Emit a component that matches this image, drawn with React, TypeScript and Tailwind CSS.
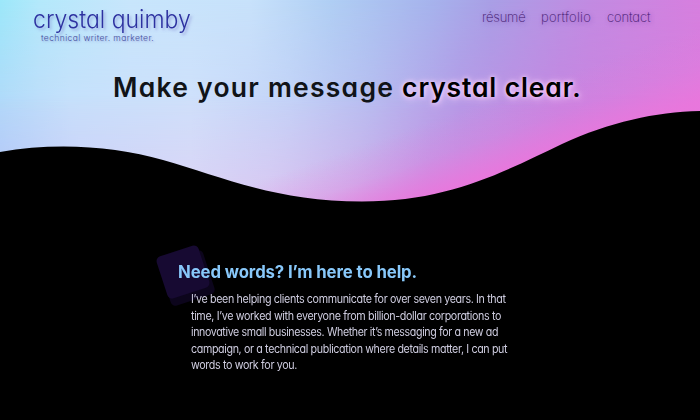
const face = "font-['Inter','Liberation_Sans',sans-serif] [font-feature-settings:'cv11'] whitespace-nowrap";

const lines = [
  { text: "I’ve been helping clients communicate for over seven years. In that", fit: "scale-x-[0.932]" },
  { text: "time, I’ve worked with everyone from billion-dollar corporations to", fit: "scale-x-[0.934]" },
  { text: "innovative small businesses. Whether it’s messaging for a new ad", fit: "scale-x-[0.924]" },
  { text: "campaign, or a technical publication where details matter, I can put", fit: "scale-x-[0.93]" },
  { text: "words to work for you.", fit: "scale-x-[0.935]" },
];

function Backdrop() {
  return (
    <div className="absolute inset-x-0 top-0 h-[210px]">
      <div className="absolute inset-0 bg-[linear-gradient(90deg,#9ce8fa_0px,#b4e9fb_40px,#c8e6fc_130px,#c8e2fb_250px,#b0cff4_330px,#a6b4ed_430px,#a99fe6_490px,#c28be2_590px,#d77fdf_700px)]" />
      <div className="absolute inset-0 bg-[linear-gradient(90deg,#b2d9f9_0px,#c6e0fb_70px,#cfe0fb_190px,#c3d2f7_290px,#b7bdf0_370px,#b699e6_460px,#c586e1_560px,#d77ddf_700px)] [mask-image:linear-gradient(180deg,transparent_0px,black_110px)]" />
      <div className="absolute inset-0 bg-[linear-gradient(90deg,#b8c4f8_0px,#cfcff8_80px,#dad4f5_190px,#d8c8f2_270px,#d0b2eb_350px,#c693e4_430px,#cd80df_570px,#e07add_700px)] [mask-image:linear-gradient(180deg,transparent_95px,black_195px)]" />
      <svg className="absolute inset-0" width="700" height="211" viewBox="0 0 700 211">
        <defs>
          <linearGradient id="glow" gradientUnits="userSpaceOnUse" x1="407" y1="129" x2="430" y2="195">
            <stop offset="0" stopColor="#ea78dc" stopOpacity="0" />
            <stop offset="0.5" stopColor="#ea78dc" stopOpacity="0.25" />
            <stop offset="1" stopColor="#ea76dc" stopOpacity="0.9" />
          </linearGradient>
        </defs>
        <rect width="700" height="211" fill="url(#glow)" />
        <path d="M0 152 C55 142 115 146 163 160 C220 176 275 201.5 362 201.5 C450 201.5 505 171 562 144 C610 122 655 112 700 111 V211 H0Z" fill="#000" />
      </svg>
    </div>
  );
}

export default function App() {
  return (
    <main className="relative h-[420px] w-[700px] overflow-hidden bg-black">
      <Backdrop />
      <header className="relative flex h-[60px] justify-between pl-[33px] pr-[50px]">
        <div className={face}>
          <div className="h-[34px] w-max origin-left scale-x-[0.96] pt-[6px] text-[24px] font-light leading-[28px] text-[#2d31a0] [text-shadow:2px_2px_3px_#7777cc88]">crystal quimby</div>
          <div className="pl-2 text-[8.5px] font-light leading-[8px] tracking-[0.4px] text-[#454e9c] [text-shadow:1px_1px_2px_#7777cc88]">technical writer. marketer.</div>
        </div>
        <nav className={`${face} flex gap-4 pt-[8px] text-[13px] font-extralight leading-[18px] text-[#40156c] [text-shadow:1px_1px_4px_#6030a099]`}>
          <a className="w-[43px] tracking-[-0.2px]">résumé</a>
          <a className="w-[50px] tracking-[0.2px]">portfolio</a>
          <a className="w-[43px] tracking-[-0.1px]">contact</a>
        </nav>
      </header>
      <h1 className="relative ml-[113px] mt-[9px] whitespace-nowrap font-['Inter',sans-serif] text-[26.5px] font-semibold leading-[36px] tracking-[1.25px] text-[#111418] [font-feature-settings:'cv11']">
        Make your message <span className="tracking-[0.85px] text-black [text-shadow:0_0_4px_#ffd8ff,1px_1px_8px_#ffd0ff]">crystal clear.</span>
      </h1>
      <section className="relative ml-[178px] mt-[154px]">
        <div className="absolute -left-[14px] -top-[4px] h-[46px] w-[46px] -rotate-[18deg] rounded-[5px] bg-[#0c051c]" />
        <div className="absolute -left-[17px] -top-[9px] h-[44px] w-[44px] -rotate-[18deg] rounded-[5px] bg-[#170a32]" />
        <h2 className={`${face} relative h-[32px] w-max origin-left scale-x-[0.985] text-[17px] font-bold leading-[26px] tracking-[-0.1px] text-[#88c8fa]`}>Need words? I’m here to help.</h2>
        <div className={`${face} relative ml-[13px] text-[11.5px] leading-[16.6px] tracking-[-0.4px] text-[#ceccdf]`}>
          {lines.map((line) => <p key={line.text} className={`w-max origin-left ${line.fit}`}>{line.text}</p>)}
        </div>
      </section>
    </main>
  );
}
